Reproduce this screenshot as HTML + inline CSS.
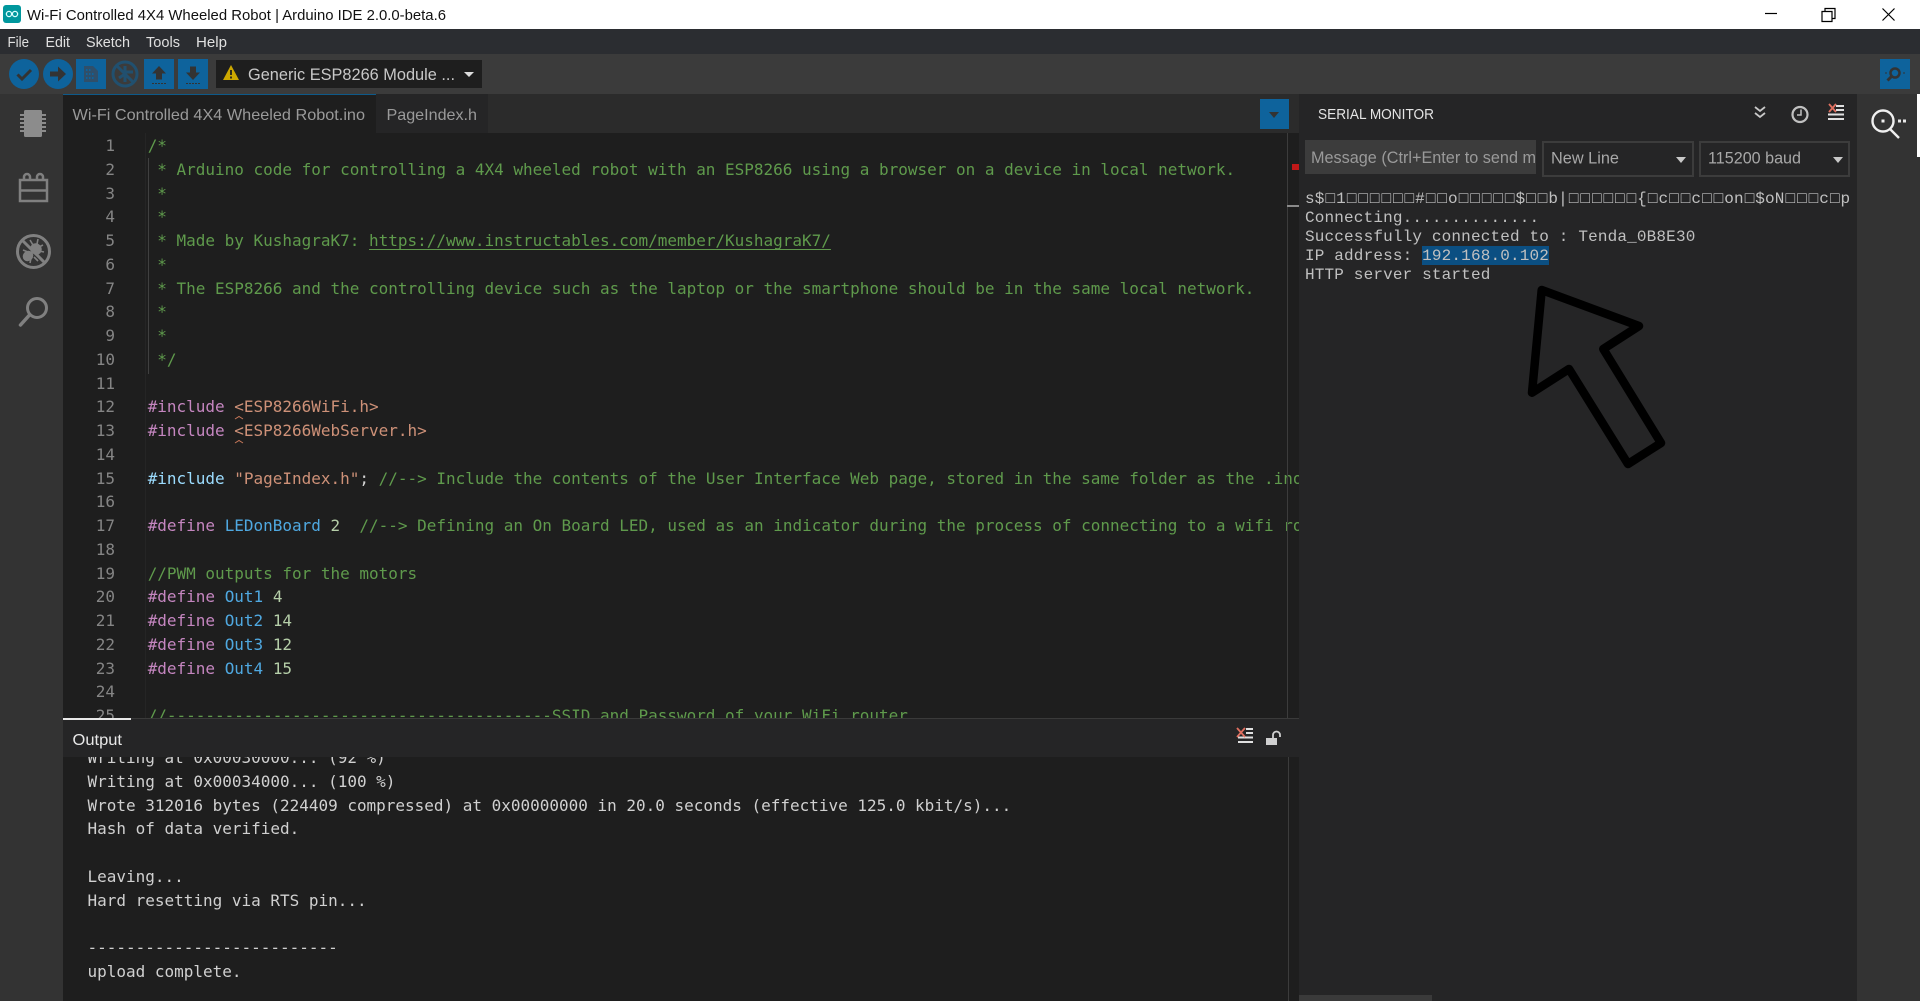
<!DOCTYPE html>
<html lang="en"><head><meta charset="utf-8"><title>Arduino IDE</title>
<style>
html,body{margin:0;padding:0;width:1920px;height:1001px;overflow:hidden;background:#252526}
.a{position:absolute}
pre{margin:0;font:16px/23.75px "DejaVu Sans Mono","Liberation Mono",monospace;white-space:pre;letter-spacing:-.01px}
.c{color:#5f9a4c}.p{color:#c586c0}.s{color:#ce9178}.b{color:#4fa8e0}.n{color:#b5cea8}.w{color:#d4d4d4}.l{color:#9cdcfe}
.u{text-decoration:underline;text-underline-offset:3px}
svg text{font-family:"Liberation Sans",sans-serif}
#serial{font:16px/18.9px "Liberation Mono",monospace;letter-spacing:.16px;color:#c0c0c0;white-space:pre}
#serial b{display:inline-block;width:11.55px;text-align:center;font-weight:normal;letter-spacing:0}
</style></head><body>
<div class="a" style="left:0;top:0;width:1920px;height:29px;background:#fff"></div>
<div class="a" style="left:0;top:29px;width:1920px;height:25px;background:#2b2d31"></div>
<div class="a" style="left:0;top:54px;width:1920px;height:40px;background:#3b3b3b"></div>
<div class="a" style="left:0;top:94px;width:63px;height:907px;background:#333"></div>
<div class="a" style="left:63px;top:94px;width:1236px;height:39px;background:#2b2b2b"></div>
<div class="a" style="left:63px;top:94px;width:313px;height:39px;background:#1e1e1e;border-top:1px solid #0e5a8a;box-sizing:border-box"></div>
<div class="a" style="left:376px;top:94px;width:112px;height:39px;background:#252526"></div>
<div class="a" style="left:1299px;top:94px;width:558px;height:907px;background:#252526"></div>
<div class="a" style="left:1857px;top:94px;width:63px;height:907px;background:#333"></div>
<div class="a" style="left:1917px;top:94px;width:3px;height:63px;background:#fff"></div>
<div class="a" style="left:1299px;top:995px;width:133px;height:6px;background:#3a3a3a"></div>

<div class="a" style="left:63px;top:133px;width:1236px;height:585px;background:#1e1e1e;overflow:hidden">
<div class="a" style="left:82px;top:0;width:1px;height:585px;background:#252525"></div>
<div class="a" style="left:85px;top:25px;width:1px;height:216px;background:#404040"></div>
<pre class="a" style="left:0;top:1px;width:52px;text-align:right;color:#858585">1
2
3
4
5
6
7
8
9
10
11
12
13
14
15
16
17
18
19
20
21
22
23
24
25</pre>
<pre class="a" style="left:84.7px;top:1px;color:#d4d4d4"><span class="c">/*
 * Arduino code for controlling a 4X4 wheeled robot with an ESP8266 using a browser on a device in local network.
 *
 *
 * Made by KushagraK7: <span class="u">https://www.instructables.com/member/KushagraK7/</span>
 *
 * The ESP8266 and the controlling device such as the laptop or the smartphone should be in the same local network.
 *
 *
 */</span>

<span class="p">#include</span> <span class="s">&lt;ESP8266WiFi.h&gt;</span>
<span class="p">#include</span> <span class="s">&lt;ESP8266WebServer.h&gt;</span>

<span class="l">#include</span> <span class="s">"PageIndex.h"</span>; <span class="c">//--&gt; Include the contents of the User Interface Web page, stored in the same folder as the .ino file</span>

<span class="p">#define</span> <span class="b">LEDonBoard</span> <span class="n">2</span>  <span class="c">//--&gt; Defining an On Board LED, used as an indicator during the process of connecting to a wifi router</span>

<span class="c">//PWM outputs for the motors</span>
<span class="p">#define</span> <span class="b">Out1</span> <span class="n">4</span>
<span class="p">#define</span> <span class="b">Out2</span> <span class="n">14</span>
<span class="p">#define</span> <span class="b">Out3</span> <span class="n">12</span>
<span class="p">#define</span> <span class="b">Out4</span> <span class="n">15</span>

<span class="c">//----------------------------------------SSID and Password of your WiFi router</span></pre>
<svg class="a" style="left:0;top:0" width="300" height="320"><path d="M172 286l4-2.500 4 2.500 M172 310l4-2.500 4 2.500" fill="none" stroke="#c8785a" stroke-width="1"/></svg>
<div class="a" style="left:1224px;top:0;width:1px;height:585px;background:#3c3c3c"></div>
<div class="a" style="left:1229px;top:31px;width:7px;height:6px;background:#c01818"></div>
<div class="a" style="left:1224px;top:72px;width:12px;height:2px;background:#8a8a8a"></div>
</div>

<div class="a" style="left:63px;top:718px;width:1236px;height:283px;background:#1e1e1e;overflow:hidden">
<pre class="a" style="left:24.5px;top:28.2px;color:#d0d0d0">Writing at 0x00030000... (92 %)
Writing at 0x00034000... (100 %)
Wrote 312016 bytes (224409 compressed) at 0x00000000 in 20.0 seconds (effective 125.0 kbit/s)...
Hash of data verified.

Leaving...
Hard resetting via RTS pin...

--------------------------
upload complete.</pre>
<div class="a" style="left:0;top:0;width:1236px;height:39px;background:#252526;border-top:1px solid #3a3a3a;box-sizing:border-box"></div>
<div class="a" style="left:0;top:0;width:68px;height:2px;background:#e8e8e8"></div>
<div class="a" style="left:1225px;top:39px;width:1px;height:244px;background:#3c3c3c"></div>
</div>

<div class="a" style="left:1305px;top:140px;width:231px;height:34px;background:#3c3c3c"></div>
<div class="a" style="left:1542px;top:141px;width:152px;height:36px;border:2px solid #3c3c3c;box-sizing:border-box"></div>
<div class="a" style="left:1699px;top:141px;width:151px;height:36px;border:2px solid #3c3c3c;box-sizing:border-box"></div>
<div class="a" style="left:1422px;top:246px;width:127px;height:19px;background:#0b4f82"></div>
<div class="a" id="serial" style="left:1305px;top:190.3px;width:552px;height:100px;overflow:hidden">s$<b>□</b>1<b>□</b><b>□</b><b>□</b><b>□</b><b>□</b><b>□</b>#<b>□</b><b>□</b>o<b>□</b><b>□</b><b>□</b><b>□</b><b>□</b>$<b>□</b><b>□</b>b|<b>□</b><b>□</b><b>□</b><b>□</b><b>□</b><b>□</b>{<b>□</b>c<b>□</b><b>□</b>c<b>□</b><b>□</b>on<b>□</b>$oN<b>□</b><b>□</b><b>□</b>c<b>□</b>p
Connecting..............
Successfully connected to : Tenda_0B8E30
IP address: 192.168.0.102
HTTP server started</div>

<svg class="a" style="left:0;top:0" width="1920" height="1001" viewBox="0 0 1920 1001">
<!-- title bar -->
<rect x="3" y="5" width="18" height="18" rx="3" fill="#00979d"/>
<circle cx="9" cy="14" r="2.600" fill="none" stroke="#dff" stroke-width="1.300"/><circle cx="15" cy="14" r="2.600" fill="none" stroke="#dff" stroke-width="1.300"/>
<text x="27" y="20" font-size="15" fill="#111" textLength="419" lengthAdjust="spacingAndGlyphs">Wi-Fi Controlled 4X4 Wheeled Robot | Arduino IDE 2.0.0-beta.6</text>
<path d="M1765 13.500h12" stroke="#000" stroke-width="1.200"/>
<path d="M1822 11.500h10v10h-10z M1825 11v-2.500h10v10h-3" fill="none" stroke="#000" stroke-width="1.200"/>
<path d="M1882.500 8.500l12 12M1894.500 8.500l-12 12" stroke="#000" stroke-width="1.200"/>
<!-- menu -->
<g font-size="14.600" fill="#e0e0e0">
<text x="7.500" y="47" textLength="21.500" lengthAdjust="spacingAndGlyphs">File</text>
<text x="45.500" y="47" textLength="24.500" lengthAdjust="spacingAndGlyphs">Edit</text>
<text x="86" y="47" textLength="44" lengthAdjust="spacingAndGlyphs">Sketch</text>
<text x="146" y="47" textLength="34" lengthAdjust="spacingAndGlyphs">Tools</text>
<text x="196" y="47" textLength="31" lengthAdjust="spacingAndGlyphs">Help</text>
</g>
<!-- toolbar -->
<circle cx="24" cy="74" r="15" fill="#0e639c"/>
<path d="M17.500 74.500l4.500 4.500 9-9" fill="none" stroke="#333" stroke-width="3"/>
<circle cx="58" cy="74" r="15" fill="#0e639c"/>
<path d="M50 71.500h8v-5l8 7.500-8 7.500v-5h-8z" fill="#333"/>
<rect x="76" y="59" width="30" height="30" fill="#0e639c"/>
<path d="M84 66h9l5 5v11h-14z" fill="#2f4f6a"/><path d="M86 69h1.500v2H86zM89 69h1.500v2H89zM86 73h1.500v2H86zM89 73h1.500v2H89zM92 73h1.500v2H92zM86 77h1.500v2H86zM89 77h1.500v2H89zM92 77h1.500v2H92z" fill="#0e639c"/>
<circle cx="125" cy="74" r="12" fill="none" stroke="#21506f" stroke-width="3"/>
<path d="M116 65l18 18M125 74l-6 4M125 66v7M133 72h-7M125 74v8" stroke="#21506f" stroke-width="3"/>
<rect x="144" y="59" width="30" height="30" fill="#0e639c"/>
<path d="M159 66l7 7.500h-4v6h-6v-6h-4z" fill="#333"/><path d="M152 83.500h14" stroke="#333" stroke-dasharray="2 1"/>
<rect x="178" y="59" width="30" height="30" fill="#0e639c"/>
<path d="M193 80l-7-7.500h4v-6h6v6h4z" fill="#333"/><path d="M186 83.500h14" stroke="#333" stroke-dasharray="2 1"/>
<rect x="216" y="60" width="266" height="28" fill="#1e1e1e"/>
<path d="M231 65l8 15h-16z" fill="#cca700"/><path d="M231 70v5M231 76.500v2" stroke="#1e1e1e" stroke-width="1.800"/>
<text x="248" y="80" font-size="16.500" fill="#c8c8c8" textLength="207" lengthAdjust="spacingAndGlyphs">Generic ESP8266 Module ...</text>
<path d="M464 72h10l-5 5z" fill="#ddd"/>
<rect x="1880" y="59" width="30" height="30" fill="#0e639c"/>
<circle cx="1895" cy="73" r="4.500" fill="none" stroke="#333" stroke-width="2.500"/><path d="M1891.500 76.500l-4 4" stroke="#333" stroke-width="3"/><path d="M1885 73h2M1903 73h2" stroke="#333"/>
<!-- tabs -->
<g font-size="16" fill="#9a9a9a">
<text x="72.500" y="120" textLength="292.500" lengthAdjust="spacingAndGlyphs">Wi-Fi Controlled 4X4 Wheeled Robot.ino</text>
<text x="386.500" y="120" textLength="90.500" lengthAdjust="spacingAndGlyphs">PageIndex.h</text>
</g>
<rect x="1260" y="99" width="29" height="30" fill="#0e639c"/>
<path d="M1269 112h10l-5 6z" fill="#333"/>
<!-- left sidebar -->
<g>
<rect x="24" y="110" width="18" height="27" rx="1.500" fill="#8c8c8c"/>
<path d="M20 115h4M20 119h4M20 123h4M20 127h4M20 131h4M42 115h4M42 119h4M42 123h4M42 127h4M42 131h4" stroke="#8c8c8c" stroke-width="2"/>
<path d="M20 180h27v21h-27zM20 190.500h27" fill="none" stroke="#808080" stroke-width="2.500"/>
<path d="M24 180v-3a3 3 0 0 1 6 0v3M37 180v-3a3 3 0 0 1 6 0v3" fill="none" stroke="#808080" stroke-width="2.500"/>
<circle cx="33.500" cy="251.500" r="16" fill="none" stroke="#808080" stroke-width="3"/>
<path d="M22 240l23 23" stroke="#808080" stroke-width="3"/>
<ellipse cx="36" cy="249" rx="5.500" ry="6" fill="#808080" transform="rotate(-45 36 249)"/><ellipse cx="28" cy="256" rx="5.500" ry="5" fill="#808080" transform="rotate(-45 28 256)"/>
<path d="M30 240l3 5M38 239l-1 5M43 245l-4 2M44 252l-5-1M23 250l5 2M30 263l1-5M38 261l-4-4" stroke="#808080" stroke-width="1.600"/>
<circle cx="37" cy="308" r="9.500" fill="none" stroke="#808080" stroke-width="3"/>
<path d="M29.500 315l-9 10" stroke="#808080" stroke-width="3.500" stroke-linecap="round"/>
</g>
<!-- serial header -->
<text x="1318" y="119" font-size="15" fill="#e4e4e4" textLength="116" lengthAdjust="spacingAndGlyphs">SERIAL MONITOR</text>
<path d="M1755 107l5 4 5-4M1755 113l5 4 5-4" fill="none" stroke="#c8c8c8" stroke-width="1.800"/>
<circle cx="1800" cy="114.500" r="7.500" fill="none" stroke="#c0c0c0" stroke-width="2.200"/><path d="M1801 109.500v5.500h-4" fill="none" stroke="#c0c0c0" stroke-width="1.500"/>
<path d="M1836 106h8M1836 110h8M1828 114.500h16M1828 119h16" stroke="#e0e0e0" stroke-width="2"/>
<path d="M1829 104l7 8M1836 104l-7 8" stroke="#e07060" stroke-width="1.800"/>
<text x="1311" y="163" font-size="16.500" fill="#9a9a9a" textLength="225" lengthAdjust="spacingAndGlyphs">Message (Ctrl+Enter to send m</text>
<text x="1551" y="163.500" font-size="16.500" fill="#a8a8a8" textLength="68" lengthAdjust="spacingAndGlyphs">New Line</text>
<path d="M1676 157h10l-5 6z" fill="#c8c8c8"/>
<text x="1708" y="163.500" font-size="16.500" fill="#a8a8a8" textLength="93" lengthAdjust="spacingAndGlyphs">115200 baud</text>
<path d="M1833 157h10l-5 6z" fill="#c8c8c8"/>
<!-- right icon -->
<circle cx="1883" cy="121" r="10.500" fill="none" stroke="#f0f0f0" stroke-width="2.400"/><rect x="1881.500" y="119.500" width="3" height="3" fill="#f0f0f0"/>
<path d="M1890 129l9 9" stroke="#f0f0f0" stroke-width="2.400"/><path d="M1898 119.500h3v3h-3zM1903 119.500h3v3h-3z" fill="#e8e8e8"/>
<!-- arrow -->
<path d="M1541.700 290L1639 326L1603.300 349L1661 443L1628 464L1569 369L1532 392.700Z" fill="none" stroke="#000" stroke-width="8.500" stroke-linejoin="round"/>
<!-- output header -->
<text x="72.500" y="745" font-size="16" fill="#e8e8e8" textLength="49.500" lengthAdjust="spacingAndGlyphs">Output</text>
<path d="M1246 729h7M1246 733h7M1238 737.500h15M1238 742h15" stroke="#e0e0e0" stroke-width="2"/>
<path d="M1237 728l8 9M1245 728l-8 9" stroke="#e07060" stroke-width="1.800"/>
<rect x="1266" y="738" width="11" height="7" fill="#d0d0d0"/>
<path d="M1273 738v-3a3.500 3.500 0 0 1 7 0v2" fill="none" stroke="#d0d0d0" stroke-width="1.800"/>
</svg>
</body></html>
